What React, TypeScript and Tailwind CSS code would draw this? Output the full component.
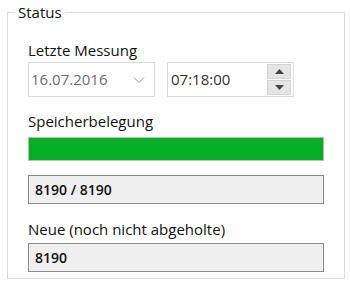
import React from 'react';

function ChevronDown() {
  return (
    <svg width="12" height="8" viewBox="0 0 12 8" className="text-[#9a9a9a]">
      <path d="M1 1.5 L6 6.5 L11 1.5" fill="none" stroke="currentColor" strokeWidth="1" />
    </svg>
  );
}

function Spinner() {
  return (
    <div className="flex flex-col gap-[1px] w-[24px] h-[31px]">
      <div className="flex-1 flex items-center justify-center bg-[#e5e5e5] border border-[#d4d4d4]">
        <svg width="9" height="5" viewBox="0 0 9 5">
          <path d="M0 5 L4.5 0 L9 5 Z" fill="#444" />
        </svg>
      </div>
      <div className="flex-1 flex items-center justify-center bg-[#e5e5e5] border border-[#d4d4d4]">
        <svg width="9" height="5" viewBox="0 0 9 5">
          <path d="M0 0 L4.5 5 L9 0 Z" fill="#444" />
        </svg>
      </div>
    </div>
  );
}

export default function App() {
  return (
    <div
      className="w-[350px] h-[287px] bg-white pt-[2px] pl-[7px] text-[15px] text-[#111]"
      style={{ fontFamily: '"Open Sans", "Liberation Sans", sans-serif' }}
    >
      <fieldset className="w-[338px] h-[277px] border border-[#dcdcdc] pl-[7px]">
        <legend className="px-[3px] leading-[20px]">Status</legend>
        <div className="pt-[18px] pl-[13px]">
          <div className="leading-[20px]">Letzte Messung</div>
          <div className="mt-[2px] flex gap-[12px]">
            <div className="w-[127px] h-[35px] border border-[#d9d9d9] flex items-center justify-between pl-[2px] pr-[9px] text-[#6d6d6d]">
              <span>16.07.2016</span>
              <ChevronDown />
            </div>
            <div className="w-[127px] h-[35px] border border-[#d9d9d9] flex items-center justify-between pl-[3px] pr-[2px] text-[#333]">
              <span>07:18:00</span>
              <Spinner />
            </div>
          </div>
          <div className="mt-[14px] leading-[20px]">Speicherbelegung</div>
          <div className="mt-[6px] w-[296px] h-[24px] border border-[#bcbcbc] bg-[#e6e6e6]">
            <div className="h-full w-full bg-[#06b025]" />
          </div>
          <div className="mt-[14px] w-[296px] h-[29px] border border-[#8a8a8a] bg-[#f0f0f0] flex items-center pl-[6px] text-[14px] font-semibold">
            8190 / 8190
          </div>
          <div className="mt-[15px] leading-[20px]">Neue (noch nicht abgeholte)</div>
          <div className="mt-[4px] w-[296px] h-[29px] border border-[#8a8a8a] bg-[#f0f0f0] flex items-center pl-[6px] text-[14px] font-semibold">
            8190
          </div>
        </div>
      </fieldset>
    </div>
  );
}
